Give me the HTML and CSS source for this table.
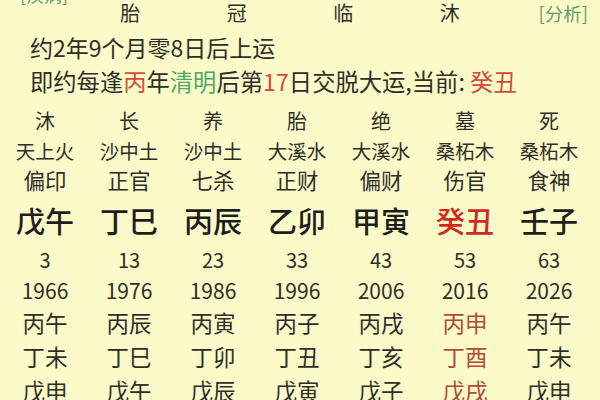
FILE: index.html
```html
<!DOCTYPE html>
<html lang="zh-CN">
<head>
<meta charset="utf-8">
<link rel="stylesheet" href="styles.css">
</head>
<body>
<div class="page">
  <div class="prev"><span class="link">[疾病]</span></div>
  <div class="top">
    <div class="cols4">
      <span>胎</span><span>冠</span><span>临</span><span>沐</span>
    </div>
    <span class="link analyze">[分析]</span>
  </div>
  <div class="line1">约2年9个月零8日后上运</div>
  <div class="line2">即约每逢<span class="red">丙</span>年<span class="green">清明</span>后第<span class="red">17</span>日交脱大运,当前: <span class="red">癸丑</span></div>

  <div class="grid">
    <div class="row r-state"><span>沐</span><span>长</span><span>养</span><span>胎</span><span>绝</span><span>墓</span><span>死</span></div>
    <div class="row r-nayin"><span>天上火</span><span>沙中土</span><span>沙中土</span><span>大溪水</span><span>大溪水</span><span>桑柘木</span><span>桑柘木</span></div>
    <div class="row r-god"><span>偏印</span><span>正官</span><span>七杀</span><span>正财</span><span>偏财</span><span>伤官</span><span>食神</span></div>
    <div class="row r-gz"><span>戊午</span><span>丁巳</span><span>丙辰</span><span>乙卯</span><span>甲寅</span><span class="cur">癸丑</span><span>壬子</span></div>
    <div class="row r-age"><span>3</span><span>13</span><span>23</span><span>33</span><span>43</span><span>53</span><span>63</span></div>
    <div class="row r-year"><span>1966</span><span>1976</span><span>1986</span><span>1996</span><span>2006</span><span>2016</span><span>2026</span></div>
    <div class="row r-yr"><span>丙午</span><span>丙辰</span><span>丙寅</span><span>丙子</span><span>丙戌</span><span class="now">丙申</span><span>丙午</span></div>
    <div class="row r-yr"><span>丁未</span><span>丁巳</span><span>丁卯</span><span>丁丑</span><span>丁亥</span><span class="now">丁酉</span><span>丁未</span></div>
    <div class="row r-yr"><span>戊申</span><span>戊午</span><span>戊辰</span><span>戊寅</span><span>戊子</span><span class="now">戊戌</span><span>戊申</span></div>
  </div>
</div>
</body>
</html>
```
FILE: styles.css
```css
html, body {
  margin: 0;
  padding: 0;
}
body {
  background: #fdfac9;
  font-family: "Noto Sans CJK SC", "Noto Sans", sans-serif;
  color: #2e2e2a;
}
.page {
  width: 600px;
  height: 400px;
  overflow: hidden;
}
.link {
  color: #5f9a6c;
}
.prev {
  margin-top: -16px;
  height: 20px;
  line-height: 20px;
  font-size: 18px;
  padding-left: 20px;
}
.top {
  display: flex;
  align-items: center;
  margin-top: -4px;
  height: 26px;
  line-height: 26px;
  font-size: 20px;
}
.cols4 {
  display: flex;
  margin-left: 77px;
}
.cols4 span {
  width: 106.5px;
  text-align: center;
}
.analyze {
  margin-left: auto;
  margin-right: 12px;
  font-size: 18.5px;
}
.line1 {
  margin-top: 6px;
  height: 30px;
  line-height: 30px;
  font-size: 23px;
  padding-left: 30px;
}
.line2 {
  margin-top: 3px;
  height: 32px;
  line-height: 32px;
  font-size: 23.3px;
  padding-left: 30px;
}
.red { color: #d24a3c; }
.green { color: #4aa866; }
.grid {
  margin-top: 9px;
  padding-left: 3px;
}
.row {
  display: grid;
  grid-template-columns: repeat(7, 84px);
  text-align: center;
  white-space: nowrap;
}
.r-state { height: 30px; line-height: 30px; font-size: 20px; }
.r-nayin { height: 29px; line-height: 29px; font-size: 19.5px; }
.r-god { height: 30px; line-height: 30px; font-size: 21.5px; }
.r-gz { height: 50px; line-height: 50px; font-size: 29px; font-weight: 500; color: #1e1e1c; }
.r-gz .cur { color: #d3281f; }
.r-age { height: 30px; line-height: 30px; font-size: 20px; }
.r-year { height: 30px; line-height: 30px; font-size: 21px; }
.r-yr { height: 34px; line-height: 34px; font-size: 22.5px; }
.r-yr .now { color: #b04a3a; }
```
